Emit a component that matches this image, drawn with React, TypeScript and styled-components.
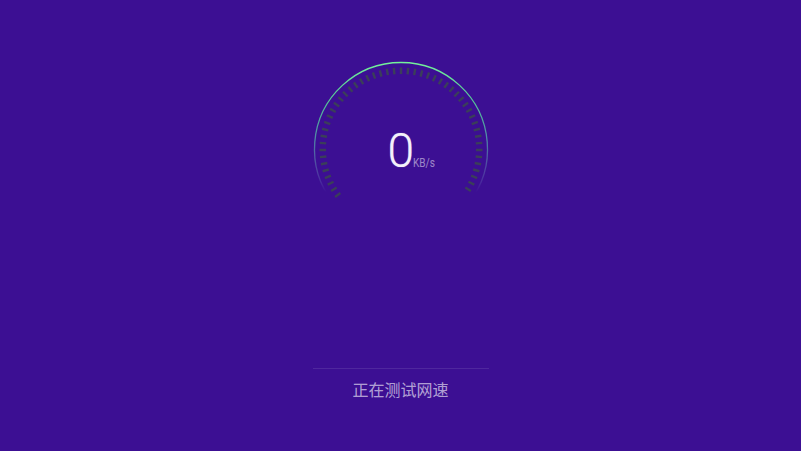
import React from 'react';
import styled, { createGlobalStyle } from 'styled-components';

const TICK_COUNT = 50;
const START_ANGLE = -126;
const STEP = 5.04;

const GlobalStyle = createGlobalStyle`
  html, body {
    margin: 0;
    height: 100%;
    background: #3c0f93;
  }

  #root {
    height: 100%;
  }
`;

const Page = styled.div`
  align-items: center;
  background: #3c0f93;
  display: flex;
  flex-direction: column;
  font-family: Roboto, "Noto Sans CJK SC", sans-serif;
  height: 451px;
  overflow: hidden;
  padding-top: 56px;
  box-sizing: border-box;
`;

const Gauge = styled.div`
  height: 150px;
  position: relative;
  width: 180px;
`;

const Reading = styled.div`
  align-items: baseline;
  color: #f4f1fa;
  display: flex;
  left: 77px;
  position: absolute;
  top: 67px;
`;

const Speed = styled.span`
  font-size: 48px;
  font-weight: 300;
  line-height: 56px;
  text-shadow: 0 0 1px rgba(255, 255, 255, 0.6);
`;

const Unit = styled.span`
  color: rgba(255, 255, 255, 0.5);
  display: inline-block;
  font-size: 12px;
  margin-left: -1px;
  transform: scaleX(0.84);
  transform-origin: left center;
`;

const Footer = styled.div`
  border-top: 1px solid rgba(255, 255, 255, 0.1);
  color: rgba(255, 255, 255, 0.62);
  font-size: 16px;
  line-height: 22px;
  margin-top: 162px;
  padding-top: 11px;
  text-align: center;
  width: 176px;
`;

const polar = (radius: number, deg: number) => {
  const rad = (deg * Math.PI) / 180;
  return { x: 90 + radius * Math.sin(rad), y: 93 - radius * Math.cos(rad) };
};

const GaugeDial = () => {
  const ticks = Array.from({ length: TICK_COUNT }, (_, i) => {
    const angle = START_ANGLE + i * STEP;
    const a = polar(75, angle);
    const b = polar(81.5, angle);
    return <line key={i} x1={a.x} y1={a.y} x2={b.x} y2={b.y} />;
  });
  const from = polar(86.5, -128);
  const to = polar(86.5, 128);

  return (
    <svg width="180" height="150" viewBox="0 0 180 150">
      <defs>
        <linearGradient id="arc" gradientUnits="userSpaceOnUse" x1="0" y1="6" x2="0" y2="136">
          <stop offset="0" stopColor="#74f29a" />
          <stop offset="0.3" stopColor="#55c697" />
          <stop offset="0.6" stopColor="#4f86a6" />
          <stop offset="0.85" stopColor="#5a5caa" stopOpacity="0.6" />
          <stop offset="1" stopColor="#6f6fc0" stopOpacity="0" />
        </linearGradient>
      </defs>
      <g stroke="#3b3e5a" strokeWidth="2.4">{ticks}</g>
      <path
        d={`M${from.x} ${from.y}A86.5 86.5 0 1 1 ${to.x} ${to.y}`}
        fill="none"
        stroke="url(#arc)"
        strokeWidth="1.3"
      />
    </svg>
  );
};

export default function App() {
  return (
    <Page>
      <GlobalStyle />
      <Gauge>
        <GaugeDial />
        <Reading>
          <Speed>0</Speed>
          <Unit>KB/s</Unit>
        </Reading>
      </Gauge>
      <Footer>正在测试网速</Footer>
    </Page>
  );
}
